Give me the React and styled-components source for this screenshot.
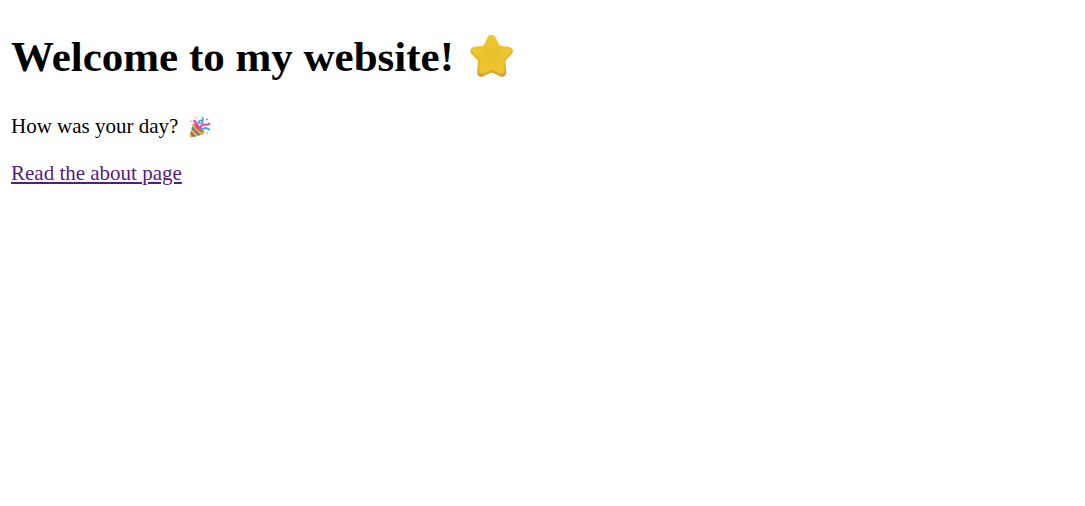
import React from "react";
import styled, { createGlobalStyle } from "styled-components";

const GlobalStyle = createGlobalStyle`
  body {
    margin: 0;
    background: #fff;
    color: #000;
    font-family: "Liberation Serif", "Times New Roman", serif;
    font-size: 21px;
    line-height: 25px;
  }
`;

const Page = styled.main`
  padding: 32px 11px;
`;

const Title = styled.h1`
  display: flex;
  align-items: center;
  gap: 16px;
  margin: 0 0 33px;
  font-size: 43px;
  line-height: 49px;
`;

const Paragraph = styled.p`
  display: flex;
  align-items: center;
  gap: 11px;
  margin: 0 0 22px;
`;

const AboutLink = styled.a`
  color: #551a8b;
  text-decoration: underline;
`;

const Emoji = styled.svg`
  flex: none;
  width: ${({ $size }) => $size}px;
  height: ${({ $size }) => $size}px;
`;

function Star() {
  const shape =
    "M17.6 3.4C19 0 24 0 25.5 3.4L28.6 9.9C29.2 11.2 30 12 31.4 12.2L39.2 13.1C42.8 13.6 44.1 17.4 41.7 19.9L36.5 25.6C35.6 26.6 35.3 27.7 35.5 29L36.3 37.5C36.8 41.6 33.3 44 29.8 42.2L23.3 39.1C22.2 38.6 21 38.6 19.9 39.1L13.4 42.2C9.9 44 6.6 41.6 7.2 37.6L8 29C8.2 27.7 7.9 26.6 7 25.6L1.6 19.9C-.8 17.4 .5 13.6 4 13.1L11.8 12.2C13.2 12 14 11.2 14.6 9.9Z";
  return (
    <Emoji $size={44} viewBox="0 1 44 44" role="img" aria-label="Star">
      <defs>
        <radialGradient id="starFace" cx="50%" cy="52%" r="58%">
          <stop offset="0" stopColor="#e6c02e" />
          <stop offset=".55" stopColor="#ebc42f" />
          <stop offset="1" stopColor="#f1ca2c" />
        </radialGradient>
        <linearGradient id="starEdge" x1="0" y1="0" x2="0" y2="1">
          <stop offset="0" stopColor="#f0c62f" />
          <stop offset=".6" stopColor="#e2b22f" />
          <stop offset="1" stopColor="#cb9638" />
        </linearGradient>
        <filter id="starSoft" x="-10%" y="-10%" width="120%" height="120%">
          <feGaussianBlur stdDeviation="1.2" />
        </filter>
      </defs>
      <path d={shape} fill="url(#starEdge)" />
      <path d={shape} fill="url(#starFace)" transform="translate(2.2 1.5) scale(.9)" filter="url(#starSoft)" />
    </Emoji>
  );
}

function PartyPopper() {
  return (
    <Emoji $size={22} viewBox="0 0 22 22" role="img" aria-label="Party popper">
      <path d="M3.8 7.5Q5.5 6 9 8.5Q14.5 12.5 15.5 16Q15.7 17.8 13.5 18.4L3 21.5Q.5 22 .8 19.7Z" fill="#f0aa46" />
      <path d="M3.2 10.4 11.6 18.9 9.2 19.6 2.7 13ZM1.9 15.5 6.8 20.3 4.4 21 1.3 18.1Z" fill="#6173bd" />
      <path d="M5 8Q7 6.8 10.5 10Q15 14.3 14.2 16.6Q11.8 16.6 8.2 13.2Q4.8 10 5 8Z" fill="#bd7448" />
      <path d="M8.8 12Q9.2 6.5 4.2 4.4" fill="none" stroke="#f43ba7" strokeWidth="2.2" />
      <path d="M11 12.2Q13 8 15.8 8.7Q18.5 9.3 21.2 7.2" fill="none" stroke="#ef42a9" strokeWidth="2" />
      <path d="M12 14.4Q15.5 10.2 20.7 13.8" fill="none" stroke="#48a8ef" strokeWidth="2.2" />
      <path d="M13.4 1Q14.6 5.5 12.8 7.1Q10.1 8 9.8 5.8Q10.5 3.7 13 4.8" fill="none" stroke="#3a9fe6" strokeWidth="1.6" />
      <circle cx="1.9" cy="5.2" r=".8" fill="#f55db4" />
      <circle cx="7.3" cy="1.8" r=".9" fill="#f9bd50" />
      <circle cx="17.9" cy="3.5" r=".9" fill="#f557b1" />
      <circle cx="18.2" cy="17.1" r="1" fill="#f6b34f" />
    </Emoji>
  );
}

export default function App() {
  return (
    <>
      <GlobalStyle />
      <Page>
        <Title>
          Welcome to my website! <Star />
        </Title>
        <Paragraph>
          How was your day? <PartyPopper />
        </Paragraph>
        <AboutLink href="#about">Read the about page</AboutLink>
      </Page>
    </>
  );
}
